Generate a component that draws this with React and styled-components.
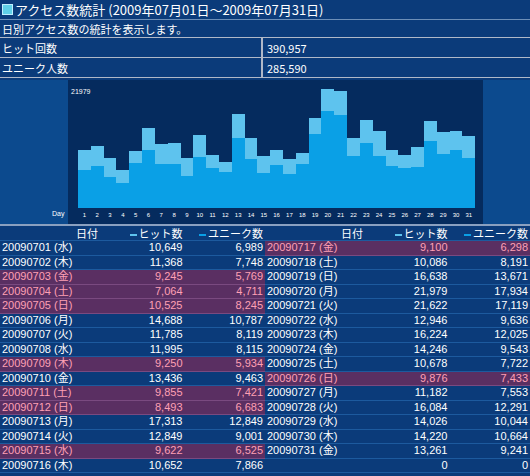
import React from 'react';
import styled, { createGlobalStyle } from 'styled-components';

const Global = createGlobalStyle`
  *, *::before, *::after { box-sizing: border-box; }
  body { margin: 0; background: #0b3b7a; font-family: "Noto Sans CJK JP", "Liberation Sans", sans-serif; }
`;

const data = [
  ['20090701', '水', 10649, 6989], ['20090702', '木', 11368, 7748], ['20090703', '金', 9245, 5769, 1],
  ['20090704', '土', 7064, 4711, 1], ['20090705', '日', 10525, 8245, 1], ['20090706', '月', 14688, 10787],
  ['20090707', '火', 11785, 8119], ['20090708', '水', 11995, 8115], ['20090709', '木', 9250, 5934, 1],
  ['20090710', '金', 13436, 9463], ['20090711', '土', 9855, 7421, 1], ['20090712', '日', 8493, 6683, 1],
  ['20090713', '月', 17313, 12849], ['20090714', '火', 12849, 9001], ['20090715', '水', 9622, 6525, 1],
  ['20090716', '木', 10652, 7866], ['20090717', '金', 9100, 6298, 1], ['20090718', '土', 10086, 8191],
  ['20090719', '日', 16638, 13671], ['20090720', '月', 21979, 17934], ['20090721', '火', 21622, 17119],
  ['20090722', '水', 12946, 9636], ['20090723', '木', 16224, 12025], ['20090724', '金', 14246, 9543],
  ['20090725', '土', 10678, 7722], ['20090726', '日', 9876, 7433, 1], ['20090727', '月', 11182, 7553],
  ['20090728', '火', 16084, 12291], ['20090729', '水', 14026, 10044], ['20090730', '木', 14220, 10664],
  ['20090731', '金', 13261, 9241],
];
const MAX = 21979;
const fmt = n => n.toLocaleString('en-US');

const Title = styled.div`
  height: 20px; display: flex; align-items: center; gap: 2px; padding-left: 2px;
  color: #fff; font-size: 13px; border-bottom: 1px solid #6d8fb8;
`;
const Square = styled.span`
  width: 11px; height: 11px; background: #5fd0e8; border: 1px solid #bfefff;
`;
const Line = styled.div`
  height: 18px; display: flex; align-items: center; padding-left: 2px;
  color: #fff; font-size: 11px; border-bottom: 1px solid #b0b8c8;
`;
const StatRow = styled.div`
  display: grid; grid-template-columns: 261px 1fr; height: 20px;
  border-bottom: 1px solid #b0b8c8; color: #fff; font-size: 11px;
  & > div { display: flex; align-items: center; padding-left: 2px; }
  & > div + div { border-left: 2px solid #b0b8c8; padding-left: 4px; }
`;
const ChartWrap = styled.div`
  height: 146px; margin-top: 2px; display: flex; border-bottom: 2px solid #8aa0c0;
`;
const Side = styled.div`
  width: ${p => p.$w}px; background: #0c4a8e;
`;
const Panel = styled.div`
  width: 415px; background: #052b5e; position: relative;
`;
const MaxLabel = styled.span`
  position: absolute; left: 3px; top: 8px; font-size: 7px; color: #fff; font-family: "Liberation Sans", sans-serif;
`;
const Plot = styled.div`
  position: absolute; left: 10px; top: 9px; width: 397px; height: 119px;
  display: flex; align-items: flex-end;
`;
const Bar = styled.div`
  flex: 1; position: relative; background: #5ec3ee;
`;
const Inner = styled.div`
  position: absolute; left: 0; right: 0; bottom: 0; background: #0aa0e6;
`;
const Days = styled.div`
  position: absolute; left: 10px; top: 132px; width: 397px; display: flex;
  font-size: 6px; color: #fff; font-family: "Liberation Sans", sans-serif;
  & span { flex: 1; text-align: center; }
`;
const DayLabel = styled.span`
  position: absolute; left: -16px; top: 130px; font-size: 7px; color: #fff; font-family: "Liberation Sans", sans-serif;
`;
const Tables = styled.div`
  display: grid; grid-template-columns: 1fr 1fr; margin-top: 1px;
`;
const Row = styled.div`
  display: grid; grid-template-columns: 100px 1fr 1fr; height: 14.5px; align-items: center;
  font-size: 11px; padding: 0 2px; line-height: 1;
  color: ${p => (p.$pink ? '#ffa0b4' : '#fff')};
  background: ${p => (p.$pink ? '#5a2f62' : '#0b3b7a')};
  border-bottom: 1px solid ${p => (p.$pink ? '#7a4a80' : '#1d5a9e')};
  font-family: "Liberation Sans", "Noto Sans CJK JP", sans-serif;
  & > span + span { text-align: right; }
`;
const Head = styled(Row)`
  height: 14px; font-family: "Noto Sans CJK JP", sans-serif;
  & > span:first-child { text-align: right; padding-right: 4px; }
`;
const Dash = styled.i`
  display: inline-block; width: 7px; height: 2px; margin-right: 2px; vertical-align: middle;
  background: ${p => p.$c};
`;

const Table = ({ rows }) => (
  <div>
    <Head>
      <span>日付</span>
      <span><Dash $c="#5ec3ee" />ヒット数</span>
      <span><Dash $c="#0aa0e6" />ユニーク数</span>
    </Head>
    {rows.map((r, i) => (
      <Row key={i} $pink={r[4]}>
        <span>{r[0]}{r[1] ? ` (${r[1]})` : ''}</span>
        <span>{fmt(r[2])}</span>
        <span>{fmt(r[3])}</span>
      </Row>
    ))}
  </div>
);

export default function App() {
  return (
    <>
      <Global />
      <Title><Square />アクセス数統計 (2009年07月01日～2009年07月31日)</Title>
      <Line>日別アクセス数の統計を表示します。</Line>
      <StatRow><div>ヒット回数</div><div>390,957</div></StatRow>
      <StatRow><div>ユニーク人数</div><div>285,590</div></StatRow>
      <ChartWrap>
        <Side $w={68} />
        <Panel>
          <MaxLabel>21979</MaxLabel>
          <Plot>
            {data.map((d, i) => (
              <Bar key={i} style={{ height: `${(d[2] / MAX) * 100}%` }}>
                <Inner style={{ height: `${(d[3] / d[2]) * 100}%` }} />
              </Bar>
            ))}
          </Plot>
          <DayLabel>Day</DayLabel>
          <Days>{data.map((d, i) => <span key={i}>{i + 1}</span>)}</Days>
        </Panel>
        <Side $w={47} />
      </ChartWrap>
      <Tables>
        <Table rows={data.slice(0, 16)} />
        <Table rows={[...data.slice(16), ['', '', 0, 0]]} />
      </Tables>
    </>
  );
}
